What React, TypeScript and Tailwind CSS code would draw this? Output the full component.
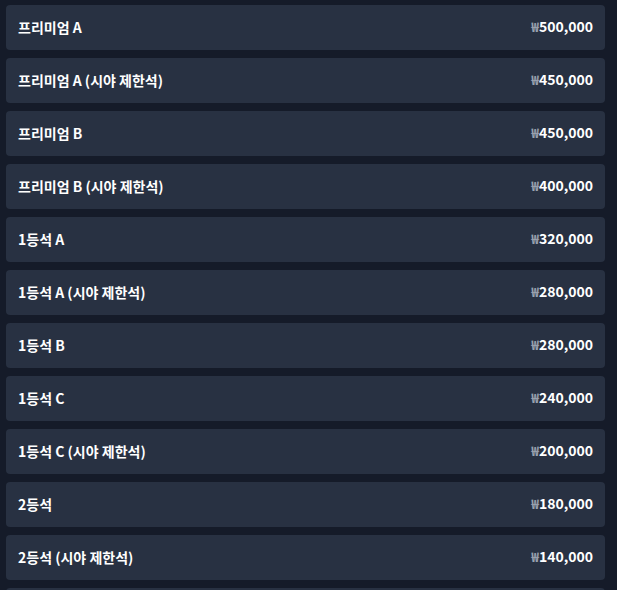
const SEATS = [
  { name: "프리미엄 A", price: "500,000" },
  { name: "프리미엄 A (시야 제한석)", price: "450,000" },
  { name: "프리미엄 B", price: "450,000" },
  { name: "프리미엄 B (시야 제한석)", price: "400,000" },
  { name: "1등석 A", price: "320,000" },
  { name: "1등석 A (시야 제한석)", price: "280,000" },
  { name: "1등석 B", price: "280,000" },
  { name: "1등석 C", price: "240,000" },
  { name: "1등석 C (시야 제한석)", price: "200,000" },
  { name: "2등석", price: "180,000" },
  { name: "2등석 (시야 제한석)", price: "140,000" },
];

export default function App() {
  return (
    <div
      className="h-[590px] overflow-hidden bg-[#151b29] pl-[6px] pr-[12px] pt-[5px]"
      style={{ fontFamily: '"Noto Sans CJK KR", "Noto Sans", sans-serif' }}
    >
      <ul className="flex flex-col gap-2">
        {SEATS.map((seat) => (
          <li
            key={seat.name}
            className="flex h-[45px] items-center justify-between rounded bg-[#283142] px-3 pb-[2px]"
          >
            <span className="text-sm font-bold text-white">{seat.name}</span>
            <span className="flex items-baseline text-sm font-bold text-white">
              <span className="text-[13px] text-gray-400">₩</span>
              {seat.price}
            </span>
          </li>
        ))}
        {/* next row, mostly below the fold */}
        <li className="h-[45px] rounded bg-[#283142]" />
      </ul>
    </div>
  );
}
